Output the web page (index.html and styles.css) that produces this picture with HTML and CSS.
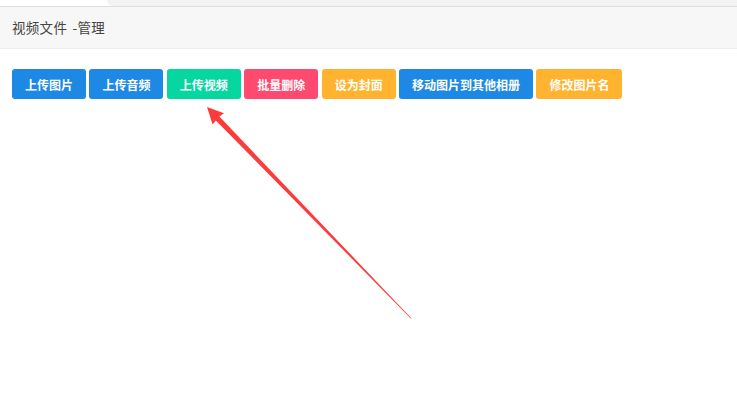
FILE: index.html
```html
<!DOCTYPE html>
<html lang="zh-CN">
<head>
    <meta charset="UTF-8">
    <meta name="viewport" content="width=device-width, initial-scale=1.0">
    <title>视频文件 -管理</title>
    <link rel="stylesheet" href="styles.css">
</head>
<body>
    <div class="topbar">
        <div class="topbar-gap"></div>
        <div class="topbar-tab"></div>
    </div>

    <div class="panel">
        <div class="panel-heading">视频文件 -管理</div>
        <div class="panel-body">
            <div class="toolbar">
                <button class="btn btn-blue">上传图片</button>
                <button class="btn btn-blue">上传音频</button>
                <button class="btn btn-green">上传视频</button>
                <button class="btn btn-red">批量删除</button>
                <button class="btn btn-orange">设为封面</button>
                <button class="btn btn-blue">移动图片到其他相册</button>
                <button class="btn btn-orange">修改图片名</button>
            </div>
        </div>
    </div>

    <!-- annotation arrow drawn over the page -->
    <svg class="annotation" width="737" height="399" viewBox="0 0 737 399">
        <polygon fill="#fe3b3b" points="207,107 224,113.2 219.4,116.6 411.6,318.4 411,318.8 215.8,120.4 212.6,124.6"/>
    </svg>
</body>
</html>
```

FILE: styles.css
```css
body {
    font-family: "Noto Sans CJK SC", "Noto Sans", sans-serif;
    background-color: #fff;
    color: #333;
    margin: 0;
    padding: 0;
}

.topbar {
    display: flex;
    height: 6px;
}

.topbar-gap {
    width: 107px;
}

.topbar-tab {
    flex: 1;
    background-color: #f3f3f3;
    border-bottom-left-radius: 6px;
}

.panel-heading {
    height: 41px;
    line-height: 41px;
    padding-left: 12px;
    font-size: 13.5px;
    color: #444;
    background-color: #f7f7f7;
    border-top: 1px solid #dedede;
    border-bottom: 1px solid #ececec;
    word-spacing: 2px;
    letter-spacing: 0.3px;
}

.panel-body {
    padding: 20px 12px;
}

.toolbar {
    display: flex;
    gap: 3.4px;
}

.btn {
    height: 30px;
    padding: 0 13px;
    border: none;
    border-radius: 3px;
    font-family: inherit;
    font-size: 12px;
    font-weight: 600;
    color: #fff;
    cursor: pointer;
}

.btn-blue {
    background-color: #1e88e5;
}

.btn-green {
    background-color: #06d6a0;
}

.btn-red {
    background-color: #ff4a6f;
}

.btn-orange {
    background-color: #ffb32f;
}

.annotation {
    position: absolute;
    left: 0;
    top: 0;
    pointer-events: none;
}
```
